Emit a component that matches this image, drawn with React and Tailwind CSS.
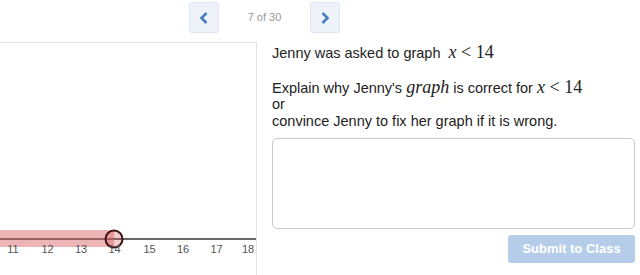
import React from "react";

const Math = ({ children }) => (
  <span className="text-[18px] leading-none" style={{ fontFamily: '"Liberation Serif", "DejaVu Serif", serif' }}>
    {children}
  </span>
);

function NumberLine() {
  const labels = [11, 12, 13, 14, 15, 16, 17, 18];
  const xs = [13, 47.5, 81, 114.5, 149.5, 183, 216.5, 248];
  return (
    <svg width="256" height="232" viewBox="0 43 256 232" className="block">
      <line x1="0" y1="239" x2="256" y2="239" stroke="#333" strokeWidth="1.6" />
      <rect x="0" y="230" width="114" height="17" fill="rgba(214,90,90,0.45)" />
      <circle cx="114" cy="239" r="8.5" fill="rgba(214,90,90,0.3)" stroke="#3b1414" strokeWidth="2" />
      {labels.map((l, i) => (
        <text
          key={l}
          x={xs[i]}
          y="253"
          textAnchor="middle"
          fontSize="11"
          fill="#555"
          fontFamily='"Liberation Sans", Arial, sans-serif'
        >
          {l}
        </text>
      ))}
    </svg>
  );
}

export default function App() {
  return (
    <div
      className="w-[640px] h-[275px] overflow-hidden bg-white text-[#222]"
      style={{ fontFamily: '"Liberation Sans", Arial, sans-serif' }}
    >
      <div className="h-[42px] flex items-start pt-[2px] pl-[189px]">
        <button className="w-[30px] h-[31px] rounded-[3px] bg-[#eef3fa] border border-[#dde6f2] flex items-center justify-center">
          <svg width="12" height="14" viewBox="0 0 12 14">
            <path d="M8.5 2 L3.5 7 L8.5 12" fill="none" stroke="#4a7cc0" strokeWidth="2.6" />
          </svg>
        </button>
        <div className="w-[91px] h-[31px] flex items-center justify-center text-[11px] text-[#999]">7 of 30</div>
        <button className="w-[30px] h-[31px] rounded-[3px] bg-[#eef3fa] border border-[#dde6f2] flex items-center justify-center">
          <svg width="12" height="14" viewBox="0 0 12 14">
            <path d="M3.5 2 L8.5 7 L3.5 12" fill="none" stroke="#4a7cc0" strokeWidth="2.6" />
          </svg>
        </button>
      </div>
      <div className="flex h-[233px]">
        <div className="w-[257px] border-t border-r border-[#e3e3e3] shrink-0">
          <NumberLine />
        </div>
        <div className="flex-1 pl-[15px] pr-[6px] flex flex-col">
          <div className="text-[14.5px] leading-[17.5px] pt-[1px]">
            <div className="h-[17.5px] whitespace-nowrap">
              Jenny was asked to graph&nbsp;&nbsp;<Math><i>x</i> &lt; 14</Math>
            </div>
            <div className="h-[17.5px]" />
            <div className="h-[17.5px] whitespace-nowrap">
              Explain why Jenny's <Math><i>graph</i></Math> is correct for <Math><i>x</i> &lt; 14</Math>
            </div>
            <div className="h-[17.5px]">or</div>
            <div className="h-[17.5px] whitespace-nowrap">convince Jenny to fix her graph if it is wrong.</div>
          </div>
          <div className="mt-[7px] h-[91px] w-[363px] rounded-[5px] border border-[#c8c8c8]" />
          <div className="flex justify-end mt-[6px]">
            <button className="w-[127px] h-[28px] rounded-[3px] bg-[#b5cde8] text-white text-[13px] font-bold">
              Submit to Class
            </button>
          </div>
        </div>
      </div>
    </div>
  );
}
